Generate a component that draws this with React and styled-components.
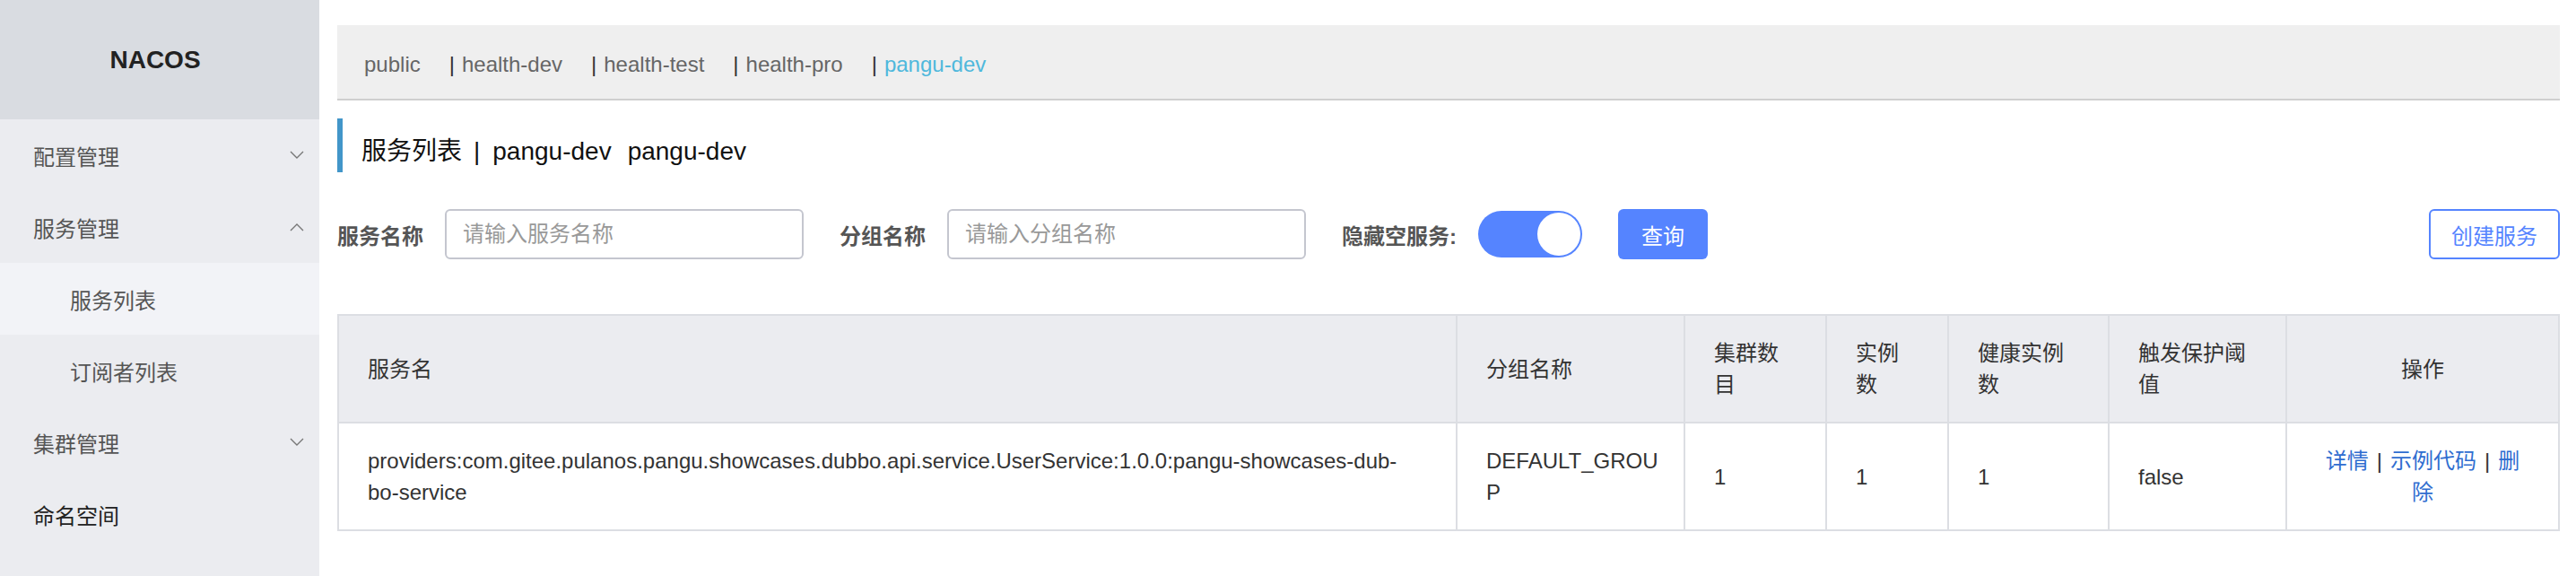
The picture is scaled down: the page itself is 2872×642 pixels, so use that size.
import React from 'react'
import styled, { createGlobalStyle } from 'styled-components'

const GlobalStyle = createGlobalStyle`
  html, body {
    margin: 0;
    padding: 0;
    background: #fff;
  }
  body {
    font-family: "Liberation Sans", Arial, "Noto Sans CJK SC", sans-serif;
    color: #333;
  }
  * { box-sizing: border-box; }
`

const namespaces = ['public', 'health-dev', 'health-test', 'health-pro', 'pangu-dev']

const menus = [
  { title: '配置管理', arrow: 'down' },
  { title: '服务管理', arrow: 'up' },
  { title: '服务列表', sub: true, active: true },
  { title: '订阅者列表', sub: true },
  { title: '集群管理', arrow: 'down' },
  { title: '命名空间', strong: true },
]

function Chevron({ dir }) {
  return (
    <ArrowIcon width="16" height="10" viewBox="0 0 16 10">
      {dir === 'up'
        ? <polyline points="1,9 8,2 15,9" />
        : <polyline points="1,1 8,8 15,1" />}
    </ArrowIcon>
  )
}

function App() {
  return (
    <Layout>
      <GlobalStyle />
      <Sidebar>
        <Logo>NACOS</Logo>
        {menus.map(m => (
          <MenuItem key={m.title} $sub={m.sub} $active={m.active} $strong={m.strong}>
            <span>{m.title}</span>
            {m.arrow && <Chevron dir={m.arrow} />}
          </MenuItem>
        ))}
      </Sidebar>

      <Main>
        <NamespaceBar>
          {namespaces.map((ns, i) => (
            <NsItem key={ns}>
              {i > 0 && <NsSep>|</NsSep>}
              <NsName $active={ns === 'pangu-dev'}>{ns}</NsName>
            </NsItem>
          ))}
        </NamespaceBar>

        <PageTitle>
          <span>服务列表</span>
          <TitleSep>|</TitleSep>
          <span>pangu-dev</span>
          <TitleId>pangu-dev</TitleId>
        </PageTitle>

        <SearchForm>
          <FormItem>
            <Label>服务名称</Label>
            <Input placeholder="请输入服务名称" />
          </FormItem>
          <FormItem>
            <Label>分组名称</Label>
            <Input placeholder="请输入分组名称" />
          </FormItem>
          <FormItem>
            <Label>隐藏空服务:</Label>
            <Switch><Knob /></Switch>
          </FormItem>
          <PrimaryButton>查询</PrimaryButton>
          <OutlineButton>创建服务</OutlineButton>
        </SearchForm>

        <Table>
          <thead>
            <tr>
              <Th>服务名</Th>
              <Th $w={254}>分组名称</Th>
              <Th $w={158}>集群数目</Th>
              <Th $w={136}>实例数</Th>
              <Th $w={179}>健康实例数</Th>
              <Th $w={198}>触发保护阈值</Th>
              <Th $w={304} $center>操作</Th>
            </tr>
          </thead>
          <tbody>
            <tr>
              <Td>
                <ServiceName>
                  providers:com.gitee.pulanos.pangu.showcases.dubbo.api.service.UserService:1.0.0:pangu-showcases-dub{'\u00AD'}bo-service
                </ServiceName>
              </Td>
              <GroupTd>DEFAULT_GROUP</GroupTd>
              <Td>1</Td>
              <Td>1</Td>
              <Td>1</Td>
              <Td>false</Td>
              <Td $center>
                <Link>详情</Link>
                <OpSep>|</OpSep>
                <Link>示例代码</Link>
                <OpSep>|</OpSep>
                <Link>删除</Link>
              </Td>
            </tr>
          </tbody>
        </Table>
      </Main>
    </Layout>
  )
}

export default App

const Layout = styled.div`
  display: flex;
  min-height: 100vh;
`

const Sidebar = styled.aside`
  width: 356px;
  flex-shrink: 0;
  background: #ebecf0;
`

const Logo = styled.div`
  height: 133px;
  background: #d9dce1;
  display: flex;
  align-items: center;
  justify-content: center;
  padding-right: 10px;
  font-size: 28px;
  font-weight: bold;
  color: #222;
`

const MenuItem = styled.div`
  height: 80px;
  display: flex;
  align-items: center;
  justify-content: space-between;
  padding: 0 17px 0 ${p => (p.$sub ? '78px' : '37px')};
  font-size: 24px;
  color: ${p => (p.$strong ? '#222' : '#555')};
  background: ${p => (p.$active ? '#f2f3f7' : 'transparent')};
`

const ArrowIcon = styled.svg`
  fill: none;
  stroke: #777;
  stroke-width: 1.4;
`

const Main = styled.main`
  flex: 1;
  padding: 28px 18px 0 20px;
`

const NamespaceBar = styled.div`
  height: 84px;
  background: #efefef;
  border-bottom: 2px solid #cfcfcf;
  display: flex;
  align-items: center;
  padding: 6px 0 0 30px;
  font-size: 24px;
`

const NsItem = styled.div`
  display: flex;
  align-items: center;
`

const NsSep = styled.span`
  color: #333;
  margin-right: 8px;
`

const NsName = styled.span`
  color: ${p => (p.$active ? '#4eb8dc' : '#666')};
  margin-right: 32px;
`

const PageTitle = styled.h2`
  margin: 20px 0 0;
  height: 60px;
  line-height: 46px;
  padding: 14px 0 0 21px;
  border-left: 6px solid #4296c9;
  font-size: 28px;
  font-weight: normal;
  color: #111;
`

const TitleSep = styled.span`
  margin: 0 14px 0 13px;
`

const TitleId = styled.span`
  margin-left: 18px;
`

const SearchForm = styled.div`
  margin-top: 41px;
  height: 56px;
  display: flex;
  align-items: center;
`

const FormItem = styled.div`
  display: flex;
  align-items: center;
  margin-right: 40px;
`

const Label = styled.label`
  font-size: 24px;
  font-weight: bold;
  color: #555;
  margin-right: 24px;
`

const Input = styled.input`
  width: 400px;
  height: 56px;
  border: 2px solid #c4c6cf;
  border-radius: 6px;
  padding: 0 18px;
  font-size: 24px;
  font-family: inherit;
  outline: none;
  &::placeholder { color: #999; }
`

const Switch = styled.div`
  position: relative;
  width: 116px;
  height: 52px;
  border-radius: 26px;
  background: #5584ff;
`

const Knob = styled.div`
  position: absolute;
  top: 2px;
  right: 2px;
  width: 48px;
  height: 48px;
  border-radius: 50%;
  background: #fff;
`

const PrimaryButton = styled.button`
  width: 100px;
  height: 56px;
  border: none;
  border-radius: 6px;
  background: #5584ff;
  color: #fff;
  font-size: 24px;
  font-family: inherit;
`

const OutlineButton = styled.button`
  margin-left: auto;
  width: 146px;
  height: 56px;
  border: 2px solid #5584ff;
  border-radius: 6px;
  background: #fff;
  color: #5584ff;
  font-size: 24px;
  font-family: inherit;
`

const Table = styled.table`
  margin-top: 61px;
  width: 100%;
  border-collapse: collapse;
  table-layout: fixed;
  font-size: 24px;
  line-height: 35px;
  color: #333;
`

const Th = styled.th`
  width: ${p => (p.$w ? `${p.$w}px` : 'auto')};
  background: #ebecf0;
  border: 2px solid #dcdee3;
  padding: 24px 32px;
  font-weight: normal;
  text-align: ${p => (p.$center ? 'center' : 'left')};
  vertical-align: middle;
`

const Td = styled.td`
  border: 2px solid #dcdee3;
  padding: 24px 32px;
  text-align: ${p => (p.$center ? 'center' : 'left')};
  vertical-align: middle;
`

const GroupTd = styled(Td)`
  padding-right: 20px;
  word-break: break-all;
`

const ServiceName = styled.span`
  display: block;
  max-width: 1160px;
`

const Link = styled.a`
  color: #2f6dd0;
  cursor: pointer;
`

const OpSep = styled.span`
  margin: 0 9px;
  color: #333;
`
